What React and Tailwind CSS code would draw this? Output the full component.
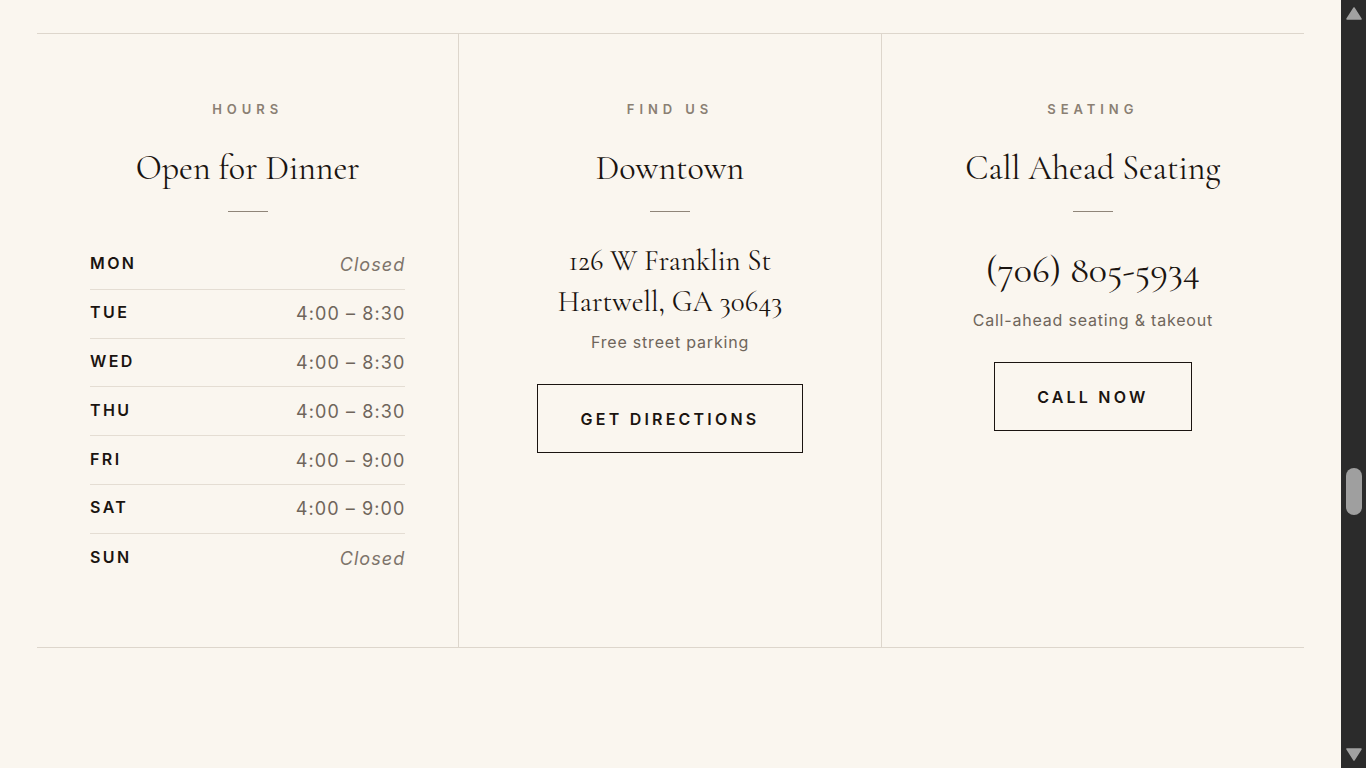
const HOURS = [
  { day: 'MON', time: 'Closed' },
  { day: 'TUE', time: '4:00 – 8:30' },
  { day: 'WED', time: '4:00 – 8:30' },
  { day: 'THU', time: '4:00 – 8:30' },
  { day: 'FRI', time: '4:00 – 9:00' },
  { day: 'SAT', time: '4:00 – 9:00' },
  { day: 'SUN', time: 'Closed' },
]

const serif = "font-['Cormorant_Garamond','Liberation_Serif',serif]"

function Eyebrow({ children }) {
  return (
    <p className="text-[13px] font-semibold uppercase leading-none tracking-[0.38em] text-[#8a7f73]">
      {children}
    </p>
  )
}

function Heading({ children }) {
  return (
    <>
      <h2 className={`${serif} mt-[36px] text-[34px] leading-none text-[#1a1410]`}>{children}</h2>
      <div className="mt-[25px] h-px w-10 bg-[#8f8579]" />
    </>
  )
}

function OutlineButton({ children, className = '' }) {
  return (
    <button
      className={`border border-[#1a1410] text-[16px] font-semibold uppercase tracking-[0.2em] text-[#1a1410] ${className}`}
    >
      {children}
    </button>
  )
}

function Arrow({ down = false }) {
  return (
    <svg width="16" height="13" viewBox="0 0 16 13" className={down ? 'rotate-180' : ''}>
      <polygon
        points="8,1 15,12 1,12"
        fill="#a2a2a2"
        stroke="#a2a2a2"
        strokeWidth="1.5"
        strokeLinejoin="round"
      />
    </svg>
  )
}

// window scrollbar, dark theme
function Scrollbar() {
  return (
    <aside className="flex w-[25px] shrink-0 flex-col bg-[#2b2b2b]">
      <div className="flex h-[25px] justify-center pt-[7px] pl-px">
        <Arrow />
      </div>
      <div className="flex-1 pt-[443px]">
        <div className="ml-[5px] h-[47px] w-4 rounded-full bg-[#9f9f9f]" />
      </div>
      <div className="flex h-[25px] justify-center pt-[5px] pl-px">
        <Arrow down />
      </div>
    </aside>
  )
}

export default function App() {
  return (
    <div className="flex h-screen overflow-hidden bg-[#faf6ef] font-['Inter','Liberation_Sans',sans-serif]">
      <main className="min-w-0 flex-1">
        <section className="px-[37px] pt-[33px]">
          <div className="grid grid-cols-3 border-y border-[#ddd6cc]">
            {/* Hours */}
            <div className="flex flex-col items-center border-r border-[#ddd6cc] px-[53px] pt-[69px] pb-[64px]">
              <Eyebrow>Hours</Eyebrow>
              <Heading>Open for Dinner</Heading>
              <ul className="mt-[29px] w-full">
                {HOURS.map((h, i) => (
                  <li
                    key={h.day}
                    className={`flex h-[48.8px] items-center justify-between ${
                      i < HOURS.length - 1 ? 'border-b border-[#e4ddd3]' : ''
                    }`}
                  >
                    <span className="-mt-[3px] text-[16px] font-semibold tracking-[0.15em] text-[#1a1410]">
                      {h.day}
                    </span>
                    <span
                      className={`text-[18px] tracking-[0.06em] ${
                        h.time === 'Closed' ? 'italic text-[#7d736a]' : 'text-[#6f655b]'
                      }`}
                    >
                      {h.time}
                    </span>
                  </li>
                ))}
              </ul>
            </div>

            {/* Location */}
            <div className="flex flex-col items-center border-r border-[#ddd6cc] px-[53px] pt-[69px] pb-[64px]">
              <Eyebrow>Find Us</Eyebrow>
              <Heading>Downtown</Heading>
              <p className={`${serif} mt-[28px] text-center text-[29px] leading-[41px] text-[#1a1410]`}>
                126 W Franklin St
                <br />
                Hartwell, GA 30643
              </p>
              <p className="mt-[8px] text-[16px] leading-[24px] tracking-[0.05em] text-[#6f655b]">
                Free street parking
              </p>
              <OutlineButton className="mt-[30px] h-[69px] w-[266px]">Get Directions</OutlineButton>
            </div>

            {/* Seating */}
            <div className="flex flex-col items-center px-[53px] pt-[69px] pb-[64px]">
              <Eyebrow>Seating</Eyebrow>
              <Heading>Call Ahead Seating</Heading>
              <p className={`${serif} mt-[39px] text-[38px] leading-none text-[#1a1410]`}>(706) 805-5934</p>
              <p className="mt-[19px] text-[16px] leading-[24px] tracking-[0.05em] text-[#6f655b]">
                Call-ahead seating &amp; takeout
              </p>
              <OutlineButton className="mt-[30px] h-[69px] w-[198px]">Call Now</OutlineButton>
            </div>
          </div>
        </section>
      </main>
      <Scrollbar />
    </div>
  )
}
